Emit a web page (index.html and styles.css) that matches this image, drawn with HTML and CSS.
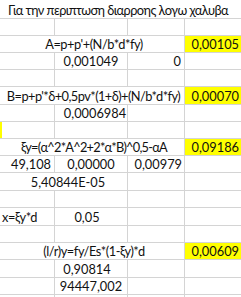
FILE: index.html
```html
<!DOCTYPE html>
<html lang="el">
<head>
<meta charset="utf-8">
<title>Sheet</title>
<link rel="stylesheet" href="styles.css">
</head>
<body>
<div class="sheet">
  <div class="row h19 title"><div class="c s4 left pl8 t tt">Για την περιπτωση διαρροης λογω χαλυβα</div></div>
  <div class="row h17"><div class="c"></div><div class="c"></div><div class="c"></div><div class="c"></div></div>
  <div class="row h17"><div class="c s3 mid t pl4">A=p+p'+(N/b*d*fy)</div><div class="c y right">0,00105</div></div>
  <div class="row h17"><div class="c"></div><div class="c mid">0,001049</div><div class="c right pr3">0</div><div class="c"></div></div>
  <div class="row h17"><div class="c"></div><div class="c"></div><div class="c"></div><div class="c"></div></div>
  <div class="row h18"><div class="c s3 mid t tb">B=p+p'*δ+0,5pv*(1+δ)+(N/b*d*fy)</div><div class="c y right">0,00070</div></div>
  <div class="row h17"><div class="c"></div><div class="c mid pl8">0,0006984</div><div class="c"></div><div class="c"></div></div>
  <div class="row h17"><div class="c edge"></div><div class="c"></div><div class="c"></div><div class="c"></div></div>
  <div class="row h17"><div class="c s3 mid t tx pl4">ξy=(α^2*A^2+2*α*B)^0,5-αA</div><div class="c y right">0,09186</div></div>
  <div class="row h17"><div class="c right pr3">49,108</div><div class="c mid">0,00000</div><div class="c right pr2">0,00979</div><div class="c"></div></div>
  <div class="row h18"><div class="c s2 mid pl9">5,40844E-05</div><div class="c"></div><div class="c"></div></div>
  <div class="row h17"><div class="c"></div><div class="c"></div><div class="c"></div><div class="c"></div></div>
  <div class="row h18"><div class="c left pl2 t">x=ξy*d</div><div class="c mid pr8">0,05</div><div class="c"></div><div class="c"></div></div>
  <div class="row h17"><div class="c"></div><div class="c"></div><div class="c"></div><div class="c"></div></div>
  <div class="row h17"><div class="c s3 mid t pl4">(l/r)y=fy/Es*(1-ξy)*d</div><div class="c y right">0,00609</div></div>
  <div class="row h18"><div class="c"></div><div class="c mid pr8">0,90814</div><div class="c"></div><div class="c"></div></div>
  <div class="row h17"><div class="c"></div><div class="c mid">94447,002</div><div class="c"></div><div class="c"></div></div>
  <div class="row h17"><div class="c"></div><div class="c"></div><div class="c"></div><div class="c"></div></div>
</div>
</body>
</html>
```
FILE: styles.css
```css
html, body {
  margin: 0;
  padding: 0;
  background: #ffffff;
}
.sheet {
  width: 241px;
  height: 297px;
  overflow: hidden;
  font-family: Lato, "Liberation Sans", sans-serif;
  font-size: 12.8px;
  color: #111111;
}
.row {
  display: grid;
  grid-template-columns: 55px 73px 57px 56px;
}
.h17 { height: 17px; }
.h18 { height: 18px; }
.h19 { height: 19px; }
.c {
  box-sizing: border-box;
  border-right: 1px solid #d4d4d4;
  border-bottom: 1px solid #d4d4d4;
  display: flex;
  align-items: flex-end;
  white-space: nowrap;
  padding-bottom: 1px;
  line-height: 14px;
  overflow: visible;
}
.c:last-child { border-right: none; }
.s2 { grid-column: span 2; }
.s3 { grid-column: span 3; }
.s4 { grid-column: span 4; }
.t { letter-spacing: -0.45px; }
.tt { letter-spacing: -0.55px; }
.tb { letter-spacing: -0.55px; padding-left: 3px; }
.tx { letter-spacing: -0.75px; }
.mid { justify-content: center; }
.left { justify-content: flex-start; }
.right { justify-content: flex-end; padding-right: 2px; }
.pl2 { padding-left: 2px; }
.pl4 { padding-left: 4px; }
.pl8 { padding-left: 8px; }
.pl9 { padding-left: 9px; }
.pr2 { padding-right: 2px; }
.pr3 { padding-right: 3px; }
.pr8 { padding-right: 8px; }
.y { background: #ffff00; }
.edge { box-shadow: inset 2px 0 0 #ffff00; }
```
